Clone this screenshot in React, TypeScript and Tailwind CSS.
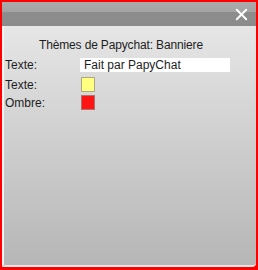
import { X } from 'lucide-react';

export default function App() {
  return (
    <div className="w-[258px] h-[270px] bg-[#ff0000] p-[2px] pb-[3px]" style={{ fontFamily: '"Liberation Sans", Arial, sans-serif' }}>
      <div className="flex flex-col h-full bg-gradient-to-b from-[#ebebeb] to-[#b6b6b6] border-l-2 border-l-[#f2f2f2] border-b-2 border-b-[#e6e6e6] rounded-br-[4px]">
        {/* Title bar */}
        <div className="h-[24px] flex justify-end items-center pr-[5px] bg-[linear-gradient(to_bottom,#aaaaaa_0%,#a4a4a4_40%,#8d8d8d_42%,#8b8b8b_100%)] -ml-[2px]">
          <X className="w-[19px] h-[19px] text-white" strokeWidth={2.4} />
        </div>

        <div className="pt-[12px] text-[12px] text-[#1e1e1e] leading-[14px]">
          <div className="pl-[35px] tracking-[-0.15px]">Thèmes de Papychat: Banniere</div>

          <div className="flex items-center mt-[6px] pl-[1px]">
            <span className="w-[75px]">Texte:</span>
            <div className="w-[150px] h-[14px] bg-white pl-[4px] leading-[14px]">Fait par PapyChat</div>
          </div>

          <div className="flex items-center mt-[5px] pl-[1px]">
            <span className="w-[76px]">Texte:</span>
            <div className="w-[14px] h-[15px] bg-[#ffff80] border border-[#b0a880]" />
          </div>

          <div className="flex items-center mt-[3px] pl-[1px]">
            <span className="w-[76px]">Ombre:</span>
            <div className="w-[14px] h-[15px] bg-[#ff1414] border border-[#b07070]" />
          </div>
        </div>
      </div>
    </div>
  );
}
